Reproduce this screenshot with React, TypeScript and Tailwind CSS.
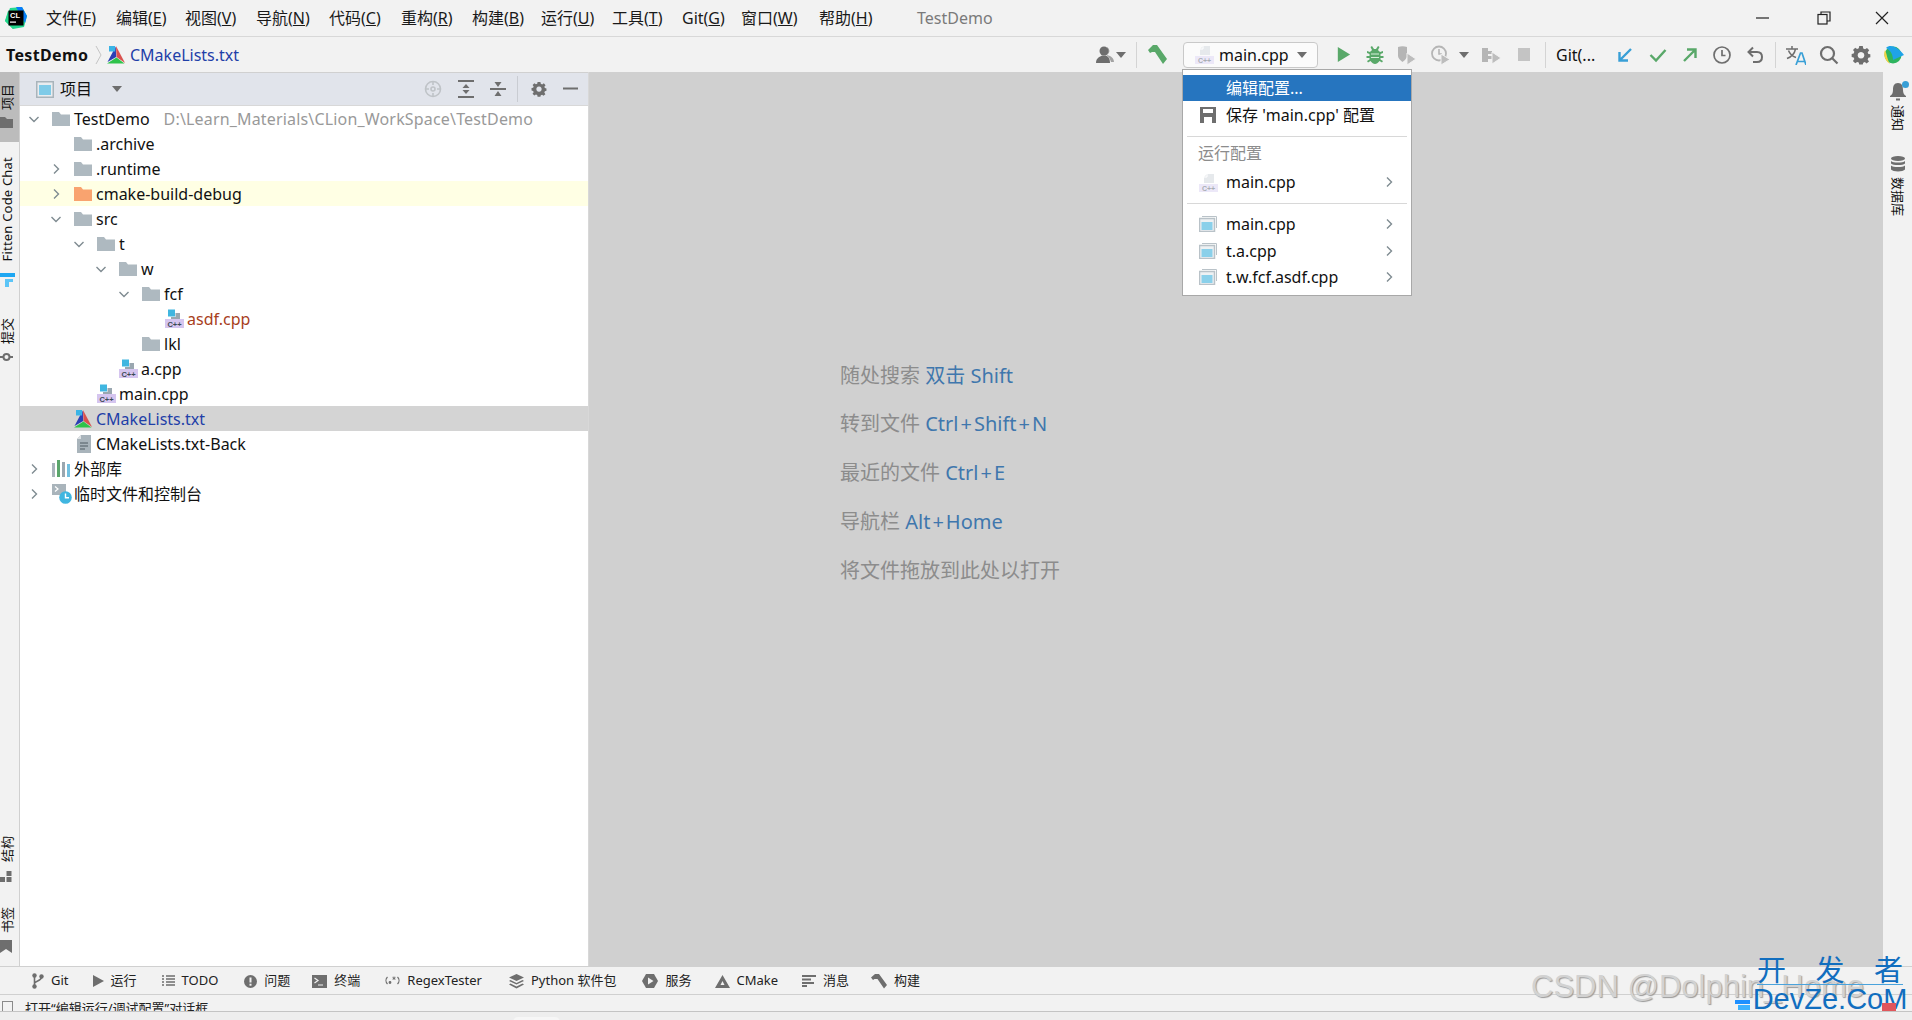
import React from "react";

const Chev = ({ down, className = "" }: { down?: boolean; className?: string }) => (
  <svg width="12" height="12" viewBox="0 0 12 12" className={className} fill="none" stroke="#7f8b91" strokeWidth="1.4">
    {down ? <path d="M1.5 4 L6 8.5 L10.5 4" /> : <path d="M4 1.5 L8.5 6 L4 10.5" />}
  </svg>
);

const Folder = ({ color = "#aeb9c0" }: { color?: string }) => (
  <svg width="18" height="14" viewBox="0 0 18 14" className="shrink-0">
    <path d="M0 0 H7 L9 2.5 H18 V14 H0 Z" fill={color} />
  </svg>
);

const Cpp = () => (
  <svg width="19" height="19" viewBox="0 0 19 19" className="shrink-0">
    <rect x="3" y="0.5" width="7" height="7" fill="#40b6e0" />
    <path d="M6 8 H10.5 V4 H15 V11 H6 Z" fill="#9aa7b0" />
    <rect x="0" y="10" width="19" height="9" fill="#d5c5ef" />
    <text x="9.5" y="17.5" textAnchor="middle" fontSize="7.5" fontWeight="700" fill="#3c4a55" fontFamily="Liberation Sans, sans-serif">C++</text>
  </svg>
);

const CppFaded = () => (
  <svg width="19" height="19" viewBox="0 0 19 19" className="shrink-0">
    <path d="M8 1 H15 V10 H5 V4 Z" fill="#e6e9ec" />
    <path d="M8 1 V4 H5" fill="none" stroke="#fff" />
    <rect x="0" y="11" width="19" height="8" fill="#ece8f8" />
    <text x="9.5" y="18" textAnchor="middle" fontSize="7" fontWeight="700" fill="#a9aeb4" fontFamily="Liberation Sans, sans-serif">C++</text>
  </svg>
);

const CMakeIcon = () => (
  <svg width="18" height="18" viewBox="0 0 18 18" className="shrink-0">
    <path d="M9 0 L18 17 L9.5 11 Z" fill="#d9524f" />
    <path d="M8.7 0.5 L9.2 11 L0.5 16 Z" fill="#2a3fb4" />
    <path d="M0 17.5 L9.5 11.5 L17.5 17.5 Z" fill="#2fc34a" />
    <rect x="2" y="0" width="6" height="5.5" fill="#3ab4e6" />
  </svg>
);

const ConfigIcon = () => (
  <svg width="18" height="16" viewBox="0 0 18 16" className="shrink-0">
    <path d="M3 0.5 H17.5 V12" fill="none" stroke="#b9c2c8" />
    <rect x="0.5" y="2.5" width="15" height="13" fill="#eef1f3" stroke="#b9c2c8" strokeWidth="1.5" />
    <rect x="2.5" y="6" width="11" height="8" fill="#8ad0ea" />
  </svg>
);

const Play = ({ color = "#59a869", size = 18 }: { color?: string; size?: number }) => (
  <svg width={size} height={size} viewBox="0 0 18 18" className="shrink-0">
    <path d="M3 1 L16 9 L3 17 Z" fill={color} />
  </svg>
);

const G = "#6e6e6e";
const Gear = ({ size = 18 }: { size?: number }) => (
  <svg width={size} height={size} viewBox="0 0 18 18" className="shrink-0">
    <path
      fillRule="evenodd"
      fill={G}
      d="M7.4 1 H10.6 L11 3.2 L12.6 3.9 L14.4 2.6 L16.4 4.8 L15 6.5 L15.6 8 L17.4 8.4 V11 L15.6 11.4 L15 13 L16.2 14.8 L14 16.6 L12.5 15.4 L11 16 L10.6 17.6 H7.4 L7 15.8 L5.5 15.2 L3.8 16.4 L1.7 14.3 L3 12.6 L2.4 11.2 L0.6 10.8 V8 L2.4 7.6 L3 6.1 L1.8 4.4 L3.8 2.4 L5.5 3.6 L7 3 Z M9 6.2 A3 3 0 1 0 9.01 6.2 Z"
    />
  </svg>
);

const Arrow = () => (
  <svg width="10" height="6" viewBox="0 0 10 6" className="shrink-0">
    <path d="M0 0 H10 L5 6 Z" fill={G} />
  </svg>
);

const menus: [string, string, string][] = [
  ["文件(", "F", ")"],
  ["编辑(", "E", ")"],
  ["视图(", "V", ")"],
  ["导航(", "N", ")"],
  ["代码(", "C", ")"],
  ["重构(", "R", ")"],
  ["构建(", "B", ")"],
  ["运行(", "U", ")"],
  ["工具(", "T", ")"],
  ["Git(", "G", ")"],
  ["窗口(", "W", ")"],
  ["帮助(", "H", ")"],
];
const menuWidths = ["w-[70px]", "w-[69px]", "w-[71px]", "w-[73px]", "w-[72px]", "w-[71px]", "w-[69px]", "w-[71px]", "w-[70px]", "w-[59px]", "w-[78px]", "w-[98px]"];

const pads = ["pl-[8px]", "pl-[30px]", "pl-[53px]", "pl-[75px]", "pl-[98px]", "pl-[121px]"];

type Row = {
  depth: number;
  chev?: "down" | "right";
  icon: React.ReactNode;
  label: React.ReactNode;
  cls?: string;
  textCls?: string;
};

const ExtLib = () => (
  <svg width="18" height="17" viewBox="0 0 18 17" className="shrink-0">
    <rect x="0" y="3" width="3" height="14" fill="#a8b4bc" />
    <rect x="5" y="0" width="3" height="17" fill="#5ba66c" />
    <rect x="10" y="2" width="3" height="15" fill="#9aa7b0" />
    <rect x="15" y="4" width="3" height="13" fill="#72c0e0" />
  </svg>
);

const Scratch = () => (
  <svg width="20" height="20" viewBox="0 0 20 20" className="shrink-0">
    <rect x="0" y="0" width="14" height="11" fill="#a9b4bb" />
    <path d="M3 2.5 L6 5 L3 7.5" fill="none" stroke="#fff" strokeWidth="1.2" />
    <circle cx="13.5" cy="13.5" r="6.3" fill="#40b6e0" />
    <path d="M13.5 9.5 V13.8 H17" fill="none" stroke="#fff" strokeWidth="1.4" />
  </svg>
);

const Doc = () => (
  <svg width="14" height="18" viewBox="0 0 14 18" className="shrink-0">
    <path d="M4 0 H14 V18 H0 V4 Z" fill="#a9b4bb" />
    <path d="M4 0 V4 H0" fill="#dde1e4" />
    <path d="M3 8 H11 M3 11 H11 M3 14 H8" stroke="#4e5a62" strokeWidth="1" />
  </svg>
);

const rows: Row[] = [
  {
    depth: 0,
    chev: "down",
    icon: <Folder />,
    label: (
      <>
        TestDemo<span className="ml-[14px] text-[#999999] tracking-[0.17px]">D:\Learn_Materials\CLion_WorkSpace\TestDemo</span>
      </>
    ),
  },
  { depth: 1, icon: <Folder />, label: ".archive" },
  { depth: 1, chev: "right", icon: <Folder />, label: ".runtime" },
  { depth: 1, chev: "right", icon: <Folder color="#f9a36f" />, label: "cmake-build-debug", cls: "bg-[#ffffe4]" },
  { depth: 1, chev: "down", icon: <Folder />, label: "src" },
  { depth: 2, chev: "down", icon: <Folder />, label: "t" },
  { depth: 3, chev: "down", icon: <Folder />, label: "w" },
  { depth: 4, chev: "down", icon: <Folder />, label: "fcf" },
  { depth: 5, icon: <Cpp />, label: "asdf.cpp", textCls: "text-[#a8401c]" },
  { depth: 4, icon: <Folder />, label: "lkl" },
  { depth: 3, icon: <Cpp />, label: "a.cpp" },
  { depth: 2, icon: <Cpp />, label: "main.cpp" },
  { depth: 1, icon: <CMakeIcon />, label: "CMakeLists.txt", cls: "bg-[#d4d4d4]", textCls: "text-[#1f3fa8]" },
  { depth: 1, icon: <div className="pl-[3px] pr-[2px]"><Doc /></div>, label: "CMakeLists.txt-Back" },
  { depth: 0, chev: "right", icon: <ExtLib />, label: "外部库" },
  { depth: 0, chev: "right", icon: <Scratch />, label: "临时文件和控制台" },
];

const bottomItems: { icon: React.ReactNode; label: string; cls: string }[] = [
  {
    cls: "ml-[32px]",
    label: "Git",
    icon: (
      <svg width="12" height="16" viewBox="0 0 12 16">
        <circle cx="2.5" cy="2.5" r="2.2" fill={G} />
        <circle cx="2.5" cy="13.5" r="2.2" fill={G} />
        <circle cx="9.5" cy="3.5" r="2.2" fill={G} />
        <path d="M2.5 3 V13 M2.5 10 C4 7.5 9.5 8 9.5 4" fill="none" stroke={G} strokeWidth="1.6" />
      </svg>
    ),
  },
  { cls: "ml-[24px]", label: "运行", icon: <svg width="11" height="12" viewBox="0 0 11 12"><path d="M0 0 L11 6 L0 12 Z" fill={G} /></svg> },
  {
    cls: "ml-[25px]",
    label: "TODO",
    icon: (
      <svg width="13" height="12" viewBox="0 0 13 12">
        <path d="M0 1 H2 M4 1 H13 M0 4 H2 M4 4 H13 M0 7 H2 M4 7 H13 M0 10 H2 M4 10 H13" stroke={G} strokeWidth="1.7" />
      </svg>
    ),
  },
  {
    cls: "ml-[26px]",
    label: "问题",
    icon: (
      <svg width="13" height="13" viewBox="0 0 13 13">
        <circle cx="6.5" cy="6.5" r="6.5" fill={G} />
        <rect x="5.5" y="2.5" width="2" height="5" fill="#f2f2f2" />
        <rect x="5.5" y="8.7" width="2" height="2" fill="#f2f2f2" />
      </svg>
    ),
  },
  {
    cls: "ml-[22px]",
    label: "终端",
    icon: (
      <svg width="15" height="13" viewBox="0 0 15 13">
        <rect width="15" height="13" fill={G} />
        <path d="M2.5 3 L6 5.5 L2.5 8 M6 10 H11" fill="none" stroke="#f2f2f2" strokeWidth="1.2" />
      </svg>
    ),
  },
  {
    cls: "ml-[25px]",
    label: "RegexTester",
    icon: (
      <svg width="15" height="12" viewBox="0 0 15 12" fill="none" stroke={G} strokeWidth="1.2">
        <path d="M2.5 2 C0.5 4 0.5 7 2.5 9 M12.5 2 C14.5 4 14.5 7 12.5 9" />
        <circle cx="5" cy="7.5" r="0.8" fill={G} />
        <path d="M9 1.5 V5 M7.5 2.3 L10.5 4.2 M10.5 2.3 L7.5 4.2" strokeWidth="0.9" />
      </svg>
    ),
  },
  {
    cls: "ml-[27px]",
    label: "Python 软件包",
    icon: (
      <svg width="15" height="15" viewBox="0 0 15 15">
        <path d="M7.5 0 L15 3.5 L7.5 7 L0 3.5 Z" fill={G} />
        <path d="M1.5 6 L7.5 9 L13.5 6 L15 7 L7.5 10.5 L0 7 Z" fill={G} />
        <path d="M1.5 9.5 L7.5 12.5 L13.5 9.5 L15 10.5 L7.5 14.5 L0 10.5 Z" fill={G} />
      </svg>
    ),
  },
  {
    cls: "ml-[26px]",
    label: "服务",
    icon: (
      <svg width="16" height="14" viewBox="0 0 16 14">
        <path d="M4 0 H12 L16 7 L12 14 H4 L0 7 Z" fill={G} />
        <path d="M6 3.5 L11.5 7 L6 10.5 Z" fill="#f2f2f2" />
      </svg>
    ),
  },
  {
    cls: "ml-[23px]",
    label: "CMake",
    icon: (
      <svg width="15" height="13" viewBox="0 0 15 13">
        <path fillRule="evenodd" d="M7.5 0 L15 13 H0 Z M7.5 6 L5.5 10 H9.5 Z" fill={G} />
      </svg>
    ),
  },
  {
    cls: "ml-[24px]",
    label: "消息",
    icon: (
      <svg width="14" height="12" viewBox="0 0 14 12">
        <path d="M0 1 H14 M0 4.5 H9 M0 8 H12 M0 11 H5" stroke={G} strokeWidth="1.8" />
      </svg>
    ),
  },
  {
    cls: "ml-[22px]",
    label: "构建",
    icon: (
      <svg width="16" height="15" viewBox="0 0 16 15">
        <path d="M0 3.5 L4 0 H8 L16 11 L13 14.5 L6.5 5 H3.5 L2 6 Z" fill={G} />
      </svg>
    ),
  },
];

function MenuRow({ icon, label, sel }: { icon?: React.ReactNode; label: string; sel?: boolean }) {
  return (
    <div className="h-[26.5px] flex items-center">
      <div className="w-[43px] pl-[16px] flex items-center shrink-0">{icon}</div>
      <span className="flex-1">{label}</span>
      {sel && <Chev className="mr-[16px]" />}
    </div>
  );
}

const Plus = () => <span className="mx-[2px]">+</span>;

export default function App() {
  return (
    <div className="relative w-[1912px] h-[1020px] overflow-hidden flex flex-col bg-[#f2f2f2] text-[16px] text-[#111111] font-['Noto_Sans','Noto_Sans_CJK_SC',sans-serif]">
      {/* title bar */}
      <div className="h-[37px] shrink-0 flex items-center border-b border-[#d8d8d8]">
        <svg width="22" height="22" viewBox="0 0 22 22" className="ml-[5px] shrink-0">
          <path d="M5 1 L17 0 L22 9 L19 20 L8 22 L0 14 Z" fill="#22d88f" />
          <path d="M11 0 L17 0 L22 9 L20 16 Z" fill="#087cfa" />
          <path d="M0 14 L3 4 L10 8 L8 22 Z" fill="#21d789" />
          <rect x="3.5" y="3.5" width="15" height="15" fill="#000" />
          <text x="5" y="11" fontSize="7.5" fontWeight="700" fill="#fff" fontFamily="Liberation Sans, sans-serif">CL</text>
          <rect x="5" y="14.5" width="6" height="1.2" fill="#fff" />
        </svg>
        <div className="ml-[19px] flex items-center text-[#1a1a1a]">
          {menus.map((m, i) => (
            <div key={i} className={`${menuWidths[i]} whitespace-nowrap`}>
              {m[0]}
              <u>{m[1]}</u>
              {m[2]}
            </div>
          ))}
        </div>
        <div className="text-[#7a7a7a]">TestDemo</div>
        <div className="flex-1" />
        <svg width="14" height="14" viewBox="0 0 14 14" className="mr-[47px]"><path d="M0 7 H13" stroke="#222" strokeWidth="1.2" /></svg>
        <svg width="14" height="14" viewBox="0 0 14 14" fill="none" stroke="#222" strokeWidth="1.2" className="mr-[44px]">
          <rect x="1" y="3.5" width="9" height="9.5" />
          <path d="M4 3.5 V1 H13 V10 H10" />
        </svg>
        <svg width="14" height="14" viewBox="0 0 14 14" className="mr-[23px]"><path d="M1 1 L13 13 M13 1 L1 13" stroke="#222" strokeWidth="1.2" /></svg>
      </div>

      {/* toolbar */}
      <div className="h-[35px] shrink-0 flex items-center">
        <span className="ml-[6px] w-[83px] font-bold tracking-[0.35px] whitespace-nowrap">TestDemo</span>
        <svg width="7" height="22" viewBox="0 0 7 22" className="ml-[6px]" fill="none" stroke="#c4c4c4"><path d="M1 2 L6 11 L1 20" /></svg>
        <div className="ml-[5px]"><CMakeIcon /></div>
        <span className="ml-[5px] text-[#1f3fa8]">CMakeLists.txt</span>
        <div className="flex-1" />
        <div className="flex items-center pr-[8px]">
          <svg width="20" height="18" viewBox="0 0 20 18" className="shrink-0">
            <circle cx="9" cy="5" r="4.5" fill={G} />
            <path d="M12 1 A4.5 4.5 0 0 1 12 9 L15 10 C17 11 19 13 19 16 H16 C15 13 14 11 12 9.5 Z" fill={G} opacity="0.6" />
            <path d="M1 17 C1 12 5 10.5 7 9.5 H11 C13 10.5 15 12 15 17 Z" fill={G} />
          </svg>
          <div className="ml-[1px]"><Arrow /></div>
          <div className="ml-[10px] w-px h-[26px] bg-[#d4d4d4]" />
          <svg width="20" height="20" viewBox="0 0 20 20" className="ml-[11px] shrink-0">
            <path d="M0 5 L5 0 H9 L19 14 L15 19 L7 7 H4 L2 8 Z" fill="#59a869" />
          </svg>
          <div className="ml-[15px] w-[135px] h-[26px] rounded-[4px] border border-[#c9c9c9] bg-[#fbfbfb] flex items-center">
            <div className="ml-[11px]"><CppFaded /></div>
            <span className="ml-[5px] w-[78px] whitespace-nowrap">main.cpp</span>
            <Arrow />
          </div>
          <div className="ml-[15px] w-[20px] flex justify-center"><Play size={17} /></div>
          <svg width="20" height="20" viewBox="0 0 20 20" className="ml-[12px] shrink-0">
            <path d="M7 1 L9 4 H11 L13 1 L14.5 2 L13 5 C14 6 14.5 6.5 15 7 L18 6 V8 L15.5 9 V11 H18.5 V13 H15.5 V14.5 L18 16 L17 17.5 L14.5 16 C13 18 11.5 19 10 19 C8.5 19 7 18 5.5 16 L3 17.5 L2 16 L4.5 14.5 V13 H1.5 V11 H4.5 V9 L2 8 V6 L5 7 C5.5 6.5 6 6 7 5 L5.5 2 Z" fill="#59a869" />
            <path d="M6 9 H14 M6 12.5 H14" stroke="#d8efdb" strokeWidth="1.2" />
          </svg>
          <svg width="20" height="20" viewBox="0 0 20 20" className="ml-[12px] shrink-0">
            <path d="M1 2 C4 1 7 1 10 2 V12 C9 14 7 16 5.5 17 C3 15 1 13 1 11 Z" fill="#b5b5b5" />
            <path d="M10 8 L19 14 L10 20 Z" fill="#bdbdbd" stroke="#f2f2f2" />
          </svg>
          <svg width="20" height="20" viewBox="0 0 20 20" className="ml-[14px] shrink-0">
            <circle cx="8" cy="8.5" r="7" fill="none" stroke="#b5b5b5" strokeWidth="1.8" />
            <path d="M8 4 V9 H11" fill="none" stroke="#b5b5b5" strokeWidth="1.6" />
            <path d="M10 9 L19 14.5 L10 20 Z" fill="#bdbdbd" stroke="#f2f2f2" />
          </svg>
          <div className="ml-[8px]"><Arrow /></div>
          <svg width="20" height="20" viewBox="0 0 20 20" className="ml-[12px] shrink-0">
            <path d="M1 3 H7 V6 H11 V9 H7 V11 H11 V14 H7 V17 H1 Z" fill="#b5b5b5" />
            <path d="M11 7 L20 13 L11 19 Z" fill="#bdbdbd" stroke="#f2f2f2" />
          </svg>
          <div className="ml-[13px] w-[20px] flex justify-center"><div className="w-[12px] h-[13px] bg-[#c4c4c4]" /></div>
          <div className="ml-[11px] w-px h-[26px] bg-[#d4d4d4]" />
          <span className="ml-[10px] w-[40px] whitespace-nowrap">Git(...</span>
          <svg width="20" height="20" viewBox="0 0 20 20" className="ml-[19px] shrink-0">
            <path d="M16 4 L5 15 M4.5 7 V15.5 H13" fill="none" stroke="#389fd6" strokeWidth="2.4" />
          </svg>
          <svg width="20" height="20" viewBox="0 0 20 20" className="ml-[13px] shrink-0">
            <path d="M2.5 10 L8 15.5 L17.5 5" fill="none" stroke="#59a869" strokeWidth="2.4" />
          </svg>
          <svg width="20" height="20" viewBox="0 0 20 20" className="ml-[12px] shrink-0">
            <path d="M4 16 L15 5 M7 4.5 H15.5 V13" fill="none" stroke="#59a869" strokeWidth="2.4" />
          </svg>
          <svg width="20" height="20" viewBox="0 0 20 20" className="ml-[12px] shrink-0" fill="none" stroke={G} strokeWidth="1.7">
            <circle cx="10" cy="10" r="8" />
            <path d="M10 5 V10.5 H13.5" />
          </svg>
          <svg width="20" height="20" viewBox="0 0 20 20" className="ml-[13px] shrink-0" fill="none" stroke={G} strokeWidth="2">
            <path d="M4 7 H12 C15 7 17 9 17 12 C17 15 15 17 12 17 H8" />
            <path d="M8 2.5 L3.5 7 L8 11.5" />
          </svg>
          <div className="ml-[10px] w-px h-[26px] bg-[#d4d4d4]" />
          <svg width="20" height="20" viewBox="0 0 20 20" className="ml-[10px] shrink-0">
            <path d="M0 4 H12 M6 1 V4 M9.5 4 C8.5 9 5 12 1 13.5 M2.5 5.5 C4 9.5 7 11.5 10 12.5" fill="none" stroke={G} strokeWidth="1.5" />
            <path d="M10 20 L14.5 8 H16 L20 20 M11.5 16.5 H18.5" fill="none" stroke="#389fd6" strokeWidth="1.7" />
          </svg>
          <svg width="20" height="20" viewBox="0 0 20 20" className="ml-[13px] shrink-0" fill="none" stroke={G} strokeWidth="2.2">
            <circle cx="8.5" cy="8.5" r="6.5" />
            <path d="M13 13 L18.5 18.5" />
          </svg>
          <div className="ml-[12px]"><Gear size={20} /></div>
          <svg width="20" height="20" viewBox="0 0 20 20" className="ml-[13px] shrink-0">
            <circle cx="9" cy="10" r="8.5" fill="#2db45f" />
            <path d="M2 3 C6 -1 13 1 20 10 L9 15 C9 9 6 5 2 3 Z" fill="#1fa3e8" />
            <path d="M1 5 C-1 10 1 16 6 19 C3 14 3 9 1 5 Z" fill="#f5d442" />
          </svg>
        </div>
      </div>

      {/* body */}
      <div className="flex-1 min-h-0 flex">
        {/* left strip */}
        <div className="w-[20px] shrink-0 border-r border-[#d0d0d0] flex flex-col text-[13px] leading-[14px]">
          <div className="h-[70px] w-[19px] shrink-0 bg-[#bcbcbc] flex flex-col items-start pt-[12px]">
            <span className="[writing-mode:vertical-rl] [text-orientation:sideways] rotate-180 whitespace-nowrap">项目</span>
            <svg width="13" height="11" viewBox="0 0 13 11" className="mt-[7px]"><path d="M0 0 H5 L7 2 H13 V11 H0 Z" fill={G} /></svg>
          </div>
          <span className="[writing-mode:vertical-rl] [text-orientation:sideways] rotate-180 mt-[15px] tracking-[0.2px] whitespace-nowrap">Fitten Code Chat</span>
          <svg width="15" height="15" viewBox="0 0 15 15" className="mt-[12px] shrink-0">
            <path d="M0 0 H15 V4 H0 Z" fill="#1ea7f2" />
            <path d="M5 6 H13 V9 H9 V14 H5 Z" fill="#5cc5f7" />
          </svg>
          <span className="[writing-mode:vertical-rl] [text-orientation:sideways] rotate-180 mt-[30px] whitespace-nowrap">提交</span>
          <svg width="13" height="10" viewBox="0 0 13 10" className="mt-[8px] shrink-0" fill="none" stroke={G} strokeWidth="2">
            <circle cx="6.5" cy="5" r="3" />
            <path d="M0 5 H3 M10 5 H13" />
          </svg>
          <div className="flex-1" />
          <span className="[writing-mode:vertical-rl] [text-orientation:sideways] rotate-180 whitespace-nowrap">结构</span>
          <svg width="12" height="11" viewBox="0 0 12 11" className="mt-[9px] shrink-0">
            <rect x="6.5" y="0" width="5" height="5" fill={G} />
            <rect x="0" y="6" width="5" height="5" fill={G} />
            <rect x="6.5" y="6" width="5" height="5" fill={G} />
          </svg>
          <span className="[writing-mode:vertical-rl] [text-orientation:sideways] rotate-180 mt-[25px] whitespace-nowrap">书签</span>
          <svg width="12" height="13" viewBox="0 0 12 13" className="mt-[7px] mb-[13px] shrink-0"><path d="M0 0 H12 V13 L6 9 L0 13 Z" fill={G} /></svg>
        </div>

        {/* project panel */}
        <div className="w-[568px] shrink-0 bg-white flex flex-col border-t border-[#d0d0d0]">
          <div className="h-[33px] shrink-0 bg-[#e1e4eb] border-b border-[#d8d8d8] flex items-center">
            <svg width="18" height="17" viewBox="0 0 18 17" className="ml-[16px]">
              <rect x="0.75" y="0.75" width="16.5" height="15.5" fill="#e9ecef" stroke="#a9b4bb" strokeWidth="1.5" />
              <rect x="3" y="4" width="12" height="10" fill="#7fcbe8" />
            </svg>
            <span className="ml-[6px] w-[52px]">项目</span>
            <Arrow />
            <div className="flex-1" />
            <svg width="18" height="18" viewBox="0 0 18 18" fill="none" stroke="#bfc3c7" strokeWidth="1.6" className="mr-[16px]">
              <circle cx="9" cy="9" r="7.5" />
              <circle cx="9" cy="9" r="2" />
              <path d="M9 1 V5 M9 13 V17 M1 9 H5 M13 9 H17" />
            </svg>
            <svg width="16" height="18" viewBox="0 0 16 18" className="mr-[16px]">
              <path d="M0 1 H16 M0 17 H16" stroke={G} strokeWidth="2" />
              <path d="M8 4 L11.5 8 H4.5 Z M8 14 L4.5 10 H11.5 Z" fill={G} />
            </svg>
            <svg width="16" height="18" viewBox="0 0 16 18" className="mr-[11px]">
              <path d="M0 9 H16" stroke={G} strokeWidth="2" />
              <path d="M8 7 L4.5 2 H11.5 Z M8 11 L11.5 16 H4.5 Z" fill={G} />
            </svg>
            <div className="w-px h-[26px] bg-[#c9ccd2] mr-[13px]" />
            <Gear size={16} />
            <svg width="16" height="4" viewBox="0 0 16 4" className="ml-[16px] mr-[9px]"><rect y="0.5" width="15" height="2" fill={G} /></svg>
          </div>
          <div className="flex-1">
            {rows.map((r, i) => (
              <div key={i} className={`h-[25px] flex items-center ${pads[r.depth]} ${r.cls ?? ""}`}>
                <div className="w-[24px] shrink-0 flex items-center">
                  {r.chev && <Chev down={r.chev === "down"} />}
                </div>
                <div className="w-[22px] shrink-0 flex items-center">{r.icon}</div>
                <span className={`whitespace-nowrap ${r.textCls ?? ""}`}>{r.label}</span>
              </div>
            ))}
          </div>
        </div>

        {/* editor */}
        <div className="flex-1 bg-[#d0d0d0] border-l border-[#d8d8d8] pl-[251px] pt-[281px] text-[20px] leading-[49px] text-[#8c8c8c]">
          <div className="h-[46px] leading-[46px]">随处搜索 <span className="text-[#3f77ad]">双击 Shift</span></div>
          <div>转到文件 <span className="text-[#3f77ad]">Ctrl<Plus />Shift<Plus />N</span></div>
          <div>最近的文件 <span className="text-[#3f77ad]">Ctrl<Plus />E</span></div>
          <div>导航栏 <span className="text-[#3f77ad]">Alt<Plus />Home</span></div>
          <div>将文件拖放到此处以打开</div>
        </div>

        {/* right strip */}
        <div className="w-[29px] shrink-0 flex flex-col items-center text-[13px] leading-[14px] pt-[11px]">
          <div className="relative">
            <svg width="16" height="18" viewBox="0 0 16 18">
              <path d="M8 0 C12 0 13 3 13 7 C13 10 14 12 16 13 V14 H0 V13 C2 12 3 10 3 7 C3 3 4 0 8 0 Z" fill={G} />
              <rect x="6" y="15.5" width="4" height="2" fill={G} />
            </svg>
            <div className="absolute -top-[2px] -right-[3px] w-[7px] h-[7px] rounded-full bg-[#389fd6]" />
          </div>
          <span className="[writing-mode:vertical-rl] [text-orientation:sideways] mt-[4px] whitespace-nowrap">通知</span>
          <svg width="14" height="16" viewBox="0 0 14 16" className="mt-[25px]" fill={G}>
            <ellipse cx="7" cy="2.5" rx="7" ry="2.5" />
            <path d="M0 5 C2 7 12 7 14 5 V7.5 C12 9.5 2 9.5 0 7.5 Z" />
            <path d="M0 9.5 C2 11.5 12 11.5 14 9.5 V13.5 C12 16 2 16 0 13.5 Z" />
          </svg>
          <span className="[writing-mode:vertical-rl] [text-orientation:sideways] mt-[5px] whitespace-nowrap">数据库</span>
        </div>
      </div>

      {/* tool window bar */}
      <div className="h-[29px] shrink-0 pt-[1px] border-t border-b border-[#d0d0d0] flex items-center text-[13px] text-[#222222]">
        {bottomItems.map((b, i) => (
          <div key={i} className={`flex items-center gap-[7px] whitespace-nowrap ${b.cls}`}>
            <div className="flex items-center">{b.icon}</div>
            <span>{b.label}</span>
          </div>
        ))}
      </div>

      {/* status */}
      <div className="h-[17px] shrink-0 border-b border-[#c4c4c4] overflow-hidden flex items-start text-[13px] leading-[20px] text-[#222222]">
        <div className="ml-[2px] mt-[6px] w-[11px] h-[12px] border border-[#8a8a8a] shrink-0" />
        <span className="ml-[12px] mt-[3px] whitespace-nowrap">打开“编辑运行/调试配置”对话框</span>
      </div>
      <div className="h-[8px] shrink-0 bg-[#eeeeee] relative overflow-hidden">
        <div className="absolute left-[513px] top-[5px] w-[47px] h-[10px] rounded-t-[5px] bg-[#f6f6f6]" />
      </div>

      {/* run config popup */}
      <div className="absolute left-[1182px] top-[69px] w-[230px] h-[227px] bg-white border border-[#a8a8a8] pt-[5px] text-[#111111]">
        <div className="h-[26px] flex items-center bg-[#2675bf] text-white pl-[43px]">编辑配置...</div>
        <div className="h-[27px] flex items-center">
          <div className="w-[43px] pl-[17px] flex items-center shrink-0">
            <svg width="16" height="16" viewBox="0 0 16 16">
              <path fillRule="evenodd" d="M0 0 H16 V16 H0 Z M3 2 V6 H13 V2 Z M4 10 V16 H12 V10 Z" fill={G} />
            </svg>
          </div>
          保存 'main.cpp' 配置
        </div>
        <div className="mt-[8px] mx-[4px] h-px bg-[#d8d8d8]" />
        <div className="h-[32px] flex items-center pl-[15px] text-[#8c8c8c]">运行配置</div>
        <div className="h-[26px]">
          <MenuRow icon={<CppFaded />} label="main.cpp" sel />
        </div>
        <div className="mt-[8px] mx-[4px] h-px bg-[#d8d8d8]" />
        <div className="mt-[7px]">
          <MenuRow icon={<ConfigIcon />} label="main.cpp" sel />
          <MenuRow icon={<ConfigIcon />} label="t.a.cpp" sel />
          <MenuRow icon={<ConfigIcon />} label="t.w.fcf.asdf.cpp" sel />
        </div>
      </div>

      {/* watermarks over the page */}
      <div className="absolute left-[1531px] top-[969px] text-[31px] leading-[36px] whitespace-nowrap text-[#d2d2d2] [text-shadow:1px_1px_1px_#9a9a9a] font-['Liberation_Sans',sans-serif]">
        CSDN @Dolphin_Home
      </div>
      <div className="absolute left-[1757px] top-[953px] w-[146px] flex flex-col items-center text-[#116ebf]">
        <div className="w-full flex justify-between text-[29px] leading-[31px] border-b border-[#4aa3dc] font-['Noto_Sans_CJK_SC',sans-serif]">
          <span>开</span>
          <span>发</span>
          <span>者</span>
        </div>
        <div className="text-[29px] leading-[26px] mt-[1px] whitespace-nowrap font-['Liberation_Sans',sans-serif]">DevZe.CoM</div>
      </div>
      <div className="absolute left-[1730px] top-[1000px] w-[20px] h-[11px] overflow-hidden">
        <div className="ml-[5px] h-[4px] bg-[#1e90ff]" />
        <div className="mt-[1px] ml-[8px] h-[5px] bg-[#3db2ff]" />
      </div>
      <div className="absolute left-[1882px] top-[1003px] w-[14px] h-[8px] bg-[#e0565b]" />
    </div>
  );
}
